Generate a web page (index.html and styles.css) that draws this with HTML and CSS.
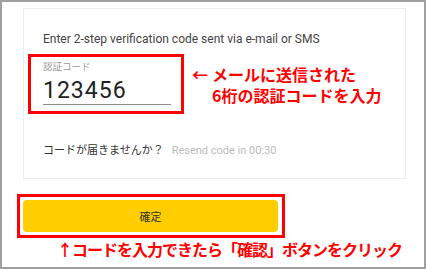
FILE: index.html
```html
<!DOCTYPE html>
<html lang="ja">
<head>
  <meta charset="UTF-8">
  <meta name="viewport" content="width=device-width, initial-scale=1.0">
  <title>2段階認証</title>
  <link rel="stylesheet" href="styles.css">
</head>
<body>
  <div class="frame">
    <div class="card">
      <p class="lead">Enter 2-step verification code sent via e-mail or SMS</p>

      <div class="field-row">
        <div class="mark field-mark">
          <label class="field-label" for="code">認証コード</label>
          <input type="text" id="code" class="code-input" value="123456">
        </div>
        <div class="note note-side">
          <span class="note-arrow">←</span>
          <span class="note-lines">
            <span class="note-line">メールに送信された</span>
            <span class="note-line">6桁の認証コードを入力</span>
          </span>
        </div>
      </div>

      <p class="resend">コードが届きませんか？<span class="resend-timer">Resend code in 00:30</span></p>
    </div>

    <div class="mark button-mark">
      <button type="submit" class="confirm">確定</button>
    </div>

    <p class="note note-bottom">↑コードを入力できたら「確認」ボタンをクリック</p>
  </div>
</body>
</html>
```

FILE: styles.css
```css
body {
  margin: 0;
  padding: 0;
  background-color: #fff;
  font-family: Roboto, "Noto Sans CJK JP", sans-serif;
}

.frame {
  box-sizing: border-box;
  width: 426px;
  height: 269px;
  border: 2px solid #a0a0a0;
  overflow: hidden;
}

.card {
  box-sizing: border-box;
  width: 383px;
  height: 171px;
  margin: 6px 0 0 21px;
  padding: 22px 19px 0;
  border: 1px solid #ececec;
}

.lead {
  margin: 0;
  font-size: 12px;
  line-height: 16px;
  color: #444;
}

.field-row {
  display: flex;
  align-items: flex-start;
  margin: 7px 0 0 -15px;
}

.mark {
  box-sizing: border-box;
  border: 3px solid #ff0000;
}

.field-mark {
  width: 156px;
  height: 60px;
  padding: 4px 10px 0 12px;
}

.field-label {
  display: block;
  font-size: 9.5px;
  line-height: 12px;
  color: #999;
}

.code-input {
  box-sizing: border-box;
  display: block;
  width: 128px;
  height: 27px;
  margin-top: 5px;
  padding: 0 0 1px;
  border: none;
  border-bottom: 1px solid #8c8c8c;
  font-family: Roboto, sans-serif;
  font-size: 23px;
  line-height: 26px;
  letter-spacing: 1px;
  color: #222;
  outline: none;
}

.note {
  font-family: "Noto Sans CJK JP", sans-serif;
  font-weight: bold;
  color: #ff0000;
}

.note-side {
  display: flex;
  margin: 10px 0 0 8px;
  font-size: 16px;
  line-height: 21px;
}

.note-arrow {
  width: 20px;
}

.note-line {
  display: block;
  height: 21px;
}

.resend {
  margin: 29px 0 0;
  font-size: 11px;
  line-height: 16px;
  color: #333;
}

.resend-timer {
  margin-left: 8px;
  color: #bbb;
}

.button-mark {
  width: 268px;
  margin: 15px 0 0 15px;
  padding: 3px 4px 3px 3px;
}

.confirm {
  display: block;
  width: 255px;
  height: 32px;
  padding: 0;
  border: none;
  border-radius: 4px;
  background-color: #ffcd00;
  font-family: Roboto, "Noto Sans CJK JP", sans-serif;
  font-size: 11px;
  color: #333;
  cursor: pointer;
}

.note-bottom {
  margin: 1px 0 0 55px;
  font-size: 16px;
  line-height: 20px;
  letter-spacing: -1px;
}
```
